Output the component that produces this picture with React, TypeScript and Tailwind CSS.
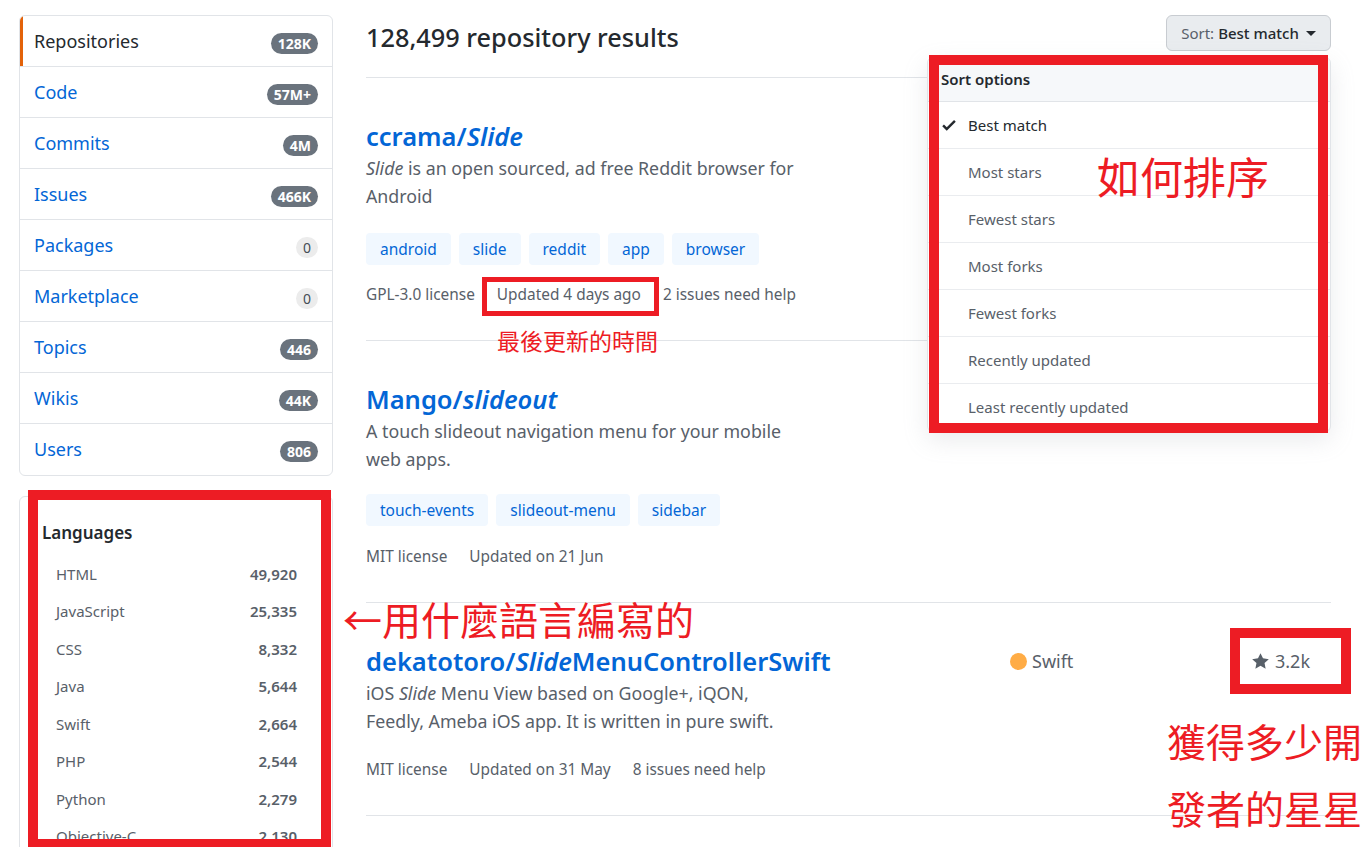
import React from 'react';

const navItems = [
  { label: 'Repositories', count: '128K', active: true },
  { label: 'Code', count: '57M+' },
  { label: 'Commits', count: '4M' },
  { label: 'Issues', count: '466K' },
  { label: 'Packages', count: '0', muted: true },
  { label: 'Marketplace', count: '0', muted: true },
  { label: 'Topics', count: '446' },
  { label: 'Wikis', count: '44K' },
  { label: 'Users', count: '806' },
];

const languages = [
  ['HTML', '49,920'],
  ['JavaScript', '25,335'],
  ['CSS', '8,332'],
  ['Java', '5,644'],
  ['Swift', '2,664'],
  ['PHP', '2,544'],
  ['Python', '2,279'],
  ['Objective-C', '2,130'],
];

const sortOptions = [
  'Best match',
  'Most stars',
  'Fewest stars',
  'Most forks',
  'Fewest forks',
  'Recently updated',
  'Least recently updated',
];

function Topic({ name }: { name: string }) {
  return (
    <span className="flex h-[32px] items-center rounded-[4px] bg-[#f1f8ff] px-[14px] pt-[1px] text-[15.5px] text-[#0366d6]">
      {name}
    </span>
  );
}

function StarIcon() {
  return (
    <svg width="17" height="19" viewBox="0 0 14 16" className="fill-[#586069]">
      <path d="M14 6l-4.9-.64L7 1 4.9 5.36 0 6l3.6 3.26L2.67 14 7 11.67 11.33 14l-.93-4.74L14 6z" />
    </svg>
  );
}

function CheckIcon() {
  return (
    <svg width="14" height="18" viewBox="0 0 12 16" className="fill-[#24292e]">
      <path d="M12 5l-8 8-4-4 1.5-1.5L4 10l6.5-6.5L12 5z" />
    </svg>
  );
}

export default function App() {
  return (
    <div className="relative h-[847px] w-[1370px] overflow-hidden bg-white font-['Noto_Sans',sans-serif] text-[#24292e]">
      <div className="flex pl-[19px] pt-[15px]">
        {/* Sidebar */}
        <aside className="w-[314px] shrink-0">
          <nav className="overflow-hidden rounded-md border border-[#e1e4e8]">
            {navItems.map((item, i) => (
              <a
                key={item.label}
                href="#"
                className={`relative flex h-[51px] items-center justify-between px-[14px] text-[18px] ${
                  i < navItems.length - 1 ? 'border-b border-[#e1e4e8]' : ''
                } ${item.active ? 'text-[#24292e]' : 'text-[#0366d6]'}`}
              >
                {item.active && <span className="absolute bottom-0 left-0 top-0 w-[3px] bg-[#e36209]" />}
                <span>{item.label}</span>
                <span
                  className={`mt-[4px] flex h-[21px] min-w-[21px] items-center justify-center rounded-full px-[7px] text-[14px] font-bold ${
                    item.muted ? 'bg-[#ececec] font-normal text-[#444d56]' : 'bg-[#6a737d] text-white'
                  }`}
                >
                  {item.count}
                </span>
              </a>
            ))}
          </nav>

          <div className="mt-[20px] h-[400px] rounded-md border border-[#e1e4e8]">
            <h2 className="pl-[22px] pt-[24px] text-[17px] font-semibold leading-[24px]">Languages</h2>
            <ul className="mt-[10px]">
              {languages.map(([name, n]) => (
                <li key={name} className="flex h-[37.5px] items-center justify-between pl-[36px] pr-[35px] text-[15px] text-[#586069]">
                  <span>{name}</span>
                  <span className="font-semibold">{n}</span>
                </li>
              ))}
            </ul>
          </div>
        </aside>

        {/* Results */}
        <main className="ml-[33px] w-[965px]">
          <div className="flex h-[63px] items-start justify-between border-b border-[#e1e4e8]">
            <h1 className="mt-[4px] text-[25.3px] font-medium leading-[36px]">128,499 repository results</h1>
            <div className="relative">
              <button className="flex h-[36px] w-[165px] items-center justify-center gap-[5px] rounded-md border border-[#c8ccd1] bg-[#e9ecef] text-[15px]">
                <span className="text-[#586069]">Sort:</span>
                <span className="-ml-[1px] font-medium">Best match</span>
                <span className="ml-[2px] h-0 w-0 border-l-[5px] border-r-[5px] border-t-[5px] border-l-transparent border-r-transparent border-t-[#24292e]" />
              </button>

              <div className="absolute right-0 top-[42px] z-10 w-[404px] overflow-hidden rounded-md border border-[#e1e4e8] bg-white shadow-[0_8px_24px_rgba(149,157,165,0.2)]">
                <div className="flex h-[44px] items-center border-b border-[#e1e4e8] bg-[#f6f8fa] pl-[13px] text-[15px] font-semibold">
                  Sort options
                </div>
                {sortOptions.map((opt, i) => (
                  <div
                    key={opt}
                    className={`flex h-[47px] items-center text-[15px] ${
                      i < sortOptions.length - 1 ? 'border-b border-[#eaecef]' : ''
                    } ${i === 0 ? 'text-[#24292e]' : 'text-[#586069]'}`}
                  >
                    <span className="flex w-[40px] justify-center pl-[2px]">{i === 0 && <CheckIcon />}</span>
                    {opt}
                  </div>
                ))}
              </div>
            </div>
          </div>

          {/* Repo 1 */}
          <div className="border-b border-[#e1e4e8] pb-[34px] pt-[42px]">
            <a href="#" className="block text-[25.5px] font-semibold leading-[32px] text-[#0366d6]">
              ccrama/<em>Slide</em>
            </a>
            <p className="mt-[2px] text-[17.8px] leading-[28px] text-[#586069]">
              <em>Slide</em> is an open sourced, ad free Reddit browser for
              <br />
              Android
            </p>
            <div className="mt-[23px] flex gap-[8px]">
              {['android', 'slide', 'reddit', 'app', 'browser'].map((t) => (
                <Topic key={t} name={t} />
              ))}
            </div>
            <div className="mt-[19px] flex gap-[22px] text-[15.4px] leading-[22px] text-[#586069]">
              <span>GPL-3.0 license</span>
              <span>Updated 4 days ago</span>
              <span>2 issues need help</span>
            </div>
          </div>

          {/* Repo 2 */}
          <div className="border-b border-[#e1e4e8] pb-[34px] pt-[42px]">
            <a href="#" className="block text-[25.5px] font-semibold leading-[32px] text-[#0366d6]">
              Mango/<em>slideout</em>
            </a>
            <p className="mt-[2px] text-[17.8px] leading-[28px] text-[#586069]">
              A touch slideout navigation menu for your mobile
              <br />
              web apps.
            </p>
            <div className="mt-[21px] flex gap-[8px]">
              {['touch-events', 'slideout-menu', 'sidebar'].map((t) => (
                <Topic key={t} name={t} />
              ))}
            </div>
            <div className="mt-[20px] flex gap-[22px] text-[15.4px] leading-[22px] text-[#586069]">
              <span>MIT license</span>
              <span>Updated on 21 Jun</span>
            </div>
          </div>

          {/* Repo 3 */}
          <div className="border-b border-[#e1e4e8] pb-[34px] pt-[42px]">
            <div className="flex items-center">
              <a href="#" className="w-[644px] text-[25.5px] font-semibold leading-[32px] text-[#0366d6]">
                dekatotoro/<em>Slide</em>MenuControllerSwift
              </a>
              <span className="flex w-[242px] items-center gap-[5px] text-[18px] text-[#586069]">
                <span className="h-[17px] w-[17px] rounded-full bg-[#ffac45]" />
                Swift
              </span>
              <span className="flex items-center gap-[6px] text-[18px] text-[#586069]">
                <StarIcon />
                3.2k
              </span>
            </div>
            <p className="mt-[2px] text-[17.8px] leading-[28px] text-[#586069]">
              iOS <em>Slide</em> Menu View based on Google+, iQON,
              <br />
              Feedly, Ameba iOS app. It is written in pure swift.
            </p>
            <div className="mt-[24px] flex gap-[22px] text-[15.4px] leading-[22px] text-[#586069]">
              <span>MIT license</span>
              <span>Updated on 31 May</span>
              <span>8 issues need help</span>
            </div>
          </div>
        </main>
      </div>

      {/* Annotations */}
      <div className="absolute left-[482px] top-[277px] h-[39px] w-[177px] border-[5px] border-[#ed1c24]" />
      <div className="absolute left-[497px] top-[325px] font-['Noto_Sans_CJK_TC',sans-serif] text-[23px] leading-[30px] text-[#ed1c24]">
        最後更新的時間
      </div>

      <div className="absolute left-[929px] top-[55px] z-20 h-[378px] w-[399px] border-[10px] border-[#ed1c24]" />
      <div className="absolute left-[1097px] top-[150px] z-20 font-['Noto_Sans_CJK_TC',sans-serif] text-[43px] leading-[50px] text-[#ed1c24]">
        如何排序
      </div>

      <div className="absolute left-[28px] top-[490px] h-[359px] w-[303px] border-[10px] border-[#ed1c24]" />
      <div className="absolute left-[343px] top-[595px] font-['Noto_Sans_CJK_TC',sans-serif] text-[39px] leading-[46px] text-[#ed1c24]">
        ←用什麼語言編寫的
      </div>

      <div className="absolute left-[1230px] top-[628px] h-[66px] w-[121px] border-[10px] border-[#ed1c24]" />
      <div className="absolute left-[1167px] top-[707px] font-['Noto_Sans_CJK_TC',sans-serif] text-[39px] leading-[67px] text-[#ed1c24]">
        獲得多少開
        <br />
        發者的星星
      </div>
    </div>
  );
}
